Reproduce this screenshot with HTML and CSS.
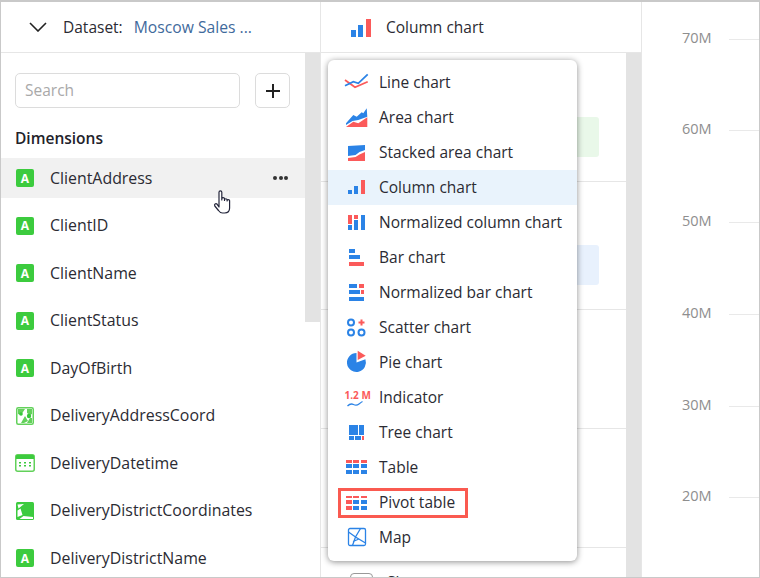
FILE: index.html
```html
<!DOCTYPE html>
<html lang="en">
<head>
    <meta charset="UTF-8">
    <title>Column chart</title>
    <link rel="stylesheet" href="styles.css">
</head>
<body>
<div class="app">
    <section class="pane fields">
        <header class="head">
            <svg class="chev" width="18" height="10" viewBox="0 0 18 10"><path d="M1 1l8 8 8-8" fill="none" stroke="#222" stroke-width="1.6"/></svg>
            <span class="head-label">Dataset:</span>
            <span class="head-link">Moscow Sales ...</span>
        </header>
        <div class="pane-body">
            <div class="field-list">
                <div class="tools">
                    <div class="search">Search</div>
                    <div class="add"><svg width="14" height="14" viewBox="0 0 14 14"><path d="M7 0v14M0 7h14" stroke="#222" stroke-width="2"/></svg></div>
                </div>
                <h2 class="group">Dimensions</h2>
                <div class="field hover"><span class="type">A</span><span class="name">ClientAddress</span><span class="dots"><i></i><i></i><i></i></span></div>
                <div class="field"><span class="type">A</span><span class="name">ClientID</span></div>
                <div class="field"><span class="type">A</span><span class="name">ClientName</span></div>
                <div class="field"><span class="type">A</span><span class="name">ClientStatus</span></div>
                <div class="field"><span class="type">A</span><span class="name">DayOfBirth</span></div>
                <div class="field">
                    <svg class="type-svg" width="18" height="18" viewBox="0 0 18 18"><rect x=".75" y=".75" width="16.5" height="16.5" rx="1.5" fill="#fff" stroke="#62d15a" stroke-width="1.5"/><path d="M2 2h7L5 8l-3-1zM11 2h5v5l-2 1-3-2zM9 9l3 5-4 2H5zM14 11h2v5h-5z" fill="#62d15a"/><circle cx="5" cy="7" r="1.8" fill="#36c73a"/><circle cx="13" cy="9" r="2.2" fill="#36c73a"/></svg>
                    <span class="name">DeliveryAddressCoord</span>
                </div>
                <div class="field">
                    <svg class="type-svg wide" width="20" height="18" viewBox="0 0 20 18"><rect x=".75" y=".75" width="18.5" height="16.5" rx="2" fill="#fff" stroke="#62d15a" stroke-width="1.5"/><path d="M1 2q0-1 1-1h16q1 0 1 1v3H1z" fill="#3ccb3e"/><path d="M4 8h2v1.500H4zM9 8h2v1.500H9zM14 8h2v1.500h-2zM4 11h2v1.500H4zM9 11h2v1.500H9zM14 11h2v1.500h-2z" fill="#3ccb3e"/></svg>
                    <span class="name">DeliveryDatetime</span>
                </div>
                <div class="field">
                    <svg class="type-svg" width="18" height="18" viewBox="0 0 18 18"><rect width="18" height="18" rx="1.500" fill="#3ccb3e"/><path d="M1.500 2.500L8 2 2.500 6.500zM1.500 8.500l3-2L6.500 13l-5 2zM7.500 14l9.500 1v2H3.500z" fill="#fff"/></svg>
                    <span class="name">DeliveryDistrictCoordinates</span>
                </div>
                <div class="field"><span class="type">A</span><span class="name">DeliveryDistrictName</span></div>
            </div>
            <div class="scroll short"></div>
        </div>
    </section>

    <section class="pane config">
        <header class="head">
            <svg class="head-icon" width="24" height="24" viewBox="0 0 24 24"><path class="b" d="M2 15h5v7H2zM9 10h5v12H9z"/><path class="r" d="M17 4h5v18h-5z"/></svg>
            <span class="head-label">Column chart</span>
        </header>
        <div class="pane-body">
            <div class="slots">
                <div class="slot s1"><div class="chip green"></div></div>
                <div class="slot s2"><div class="chip blue"></div></div>
                <div class="slot s3"></div>
                <div class="slot s4"></div>
                <div class="slot s5"><span class="check"></span><span class="check-label">Sheet</span></div>
            </div>
            <div class="scroll"></div>
        </div>
    </section>

    <section class="axis">
        <div class="tick"><span>70M</span><i></i></div>
        <div class="tick"><span>60M</span><i></i></div>
        <div class="tick"><span>50M</span><i></i></div>
        <div class="tick"><span>40M</span><i></i></div>
        <div class="tick"><span>30M</span><i></i></div>
        <div class="tick"><span>20M</span><i></i></div>
    </section>

    <ul class="menu">
        <li><svg width="24" height="24" viewBox="0 0 24 24"><path d="M1 10l10 7.300 12.700-5.600" fill="none" stroke="#fb5a5a" stroke-width="1.800"/><path d="M1 15.700l8.300-4 5 1.600 9.400-9" fill="none" stroke="#2b83e6" stroke-width="1.800"/></svg>Line chart</li>
        <li><svg width="24" height="24" viewBox="0 0 24 24"><path class="b" d="M2 18.300l7.300-8.300 3.400 1.700 5-4.400 1.600 1 3.400-5 .6 8.400-9 3.300-5.800 1-6.500 4z"/><path class="r" d="M2 22l7.300-5.300 5 1.600 9-6V22z"/></svg>Area chart</li>
        <li><svg width="24" height="24" viewBox="0 0 24 24"><path class="b" d="M4 6l17-1v5l-5.500 2-4 3L4 16z"/><path class="r" d="M4 18l7.500-1 4-2.500L21 12v9H4z"/></svg>Stacked area chart</li>
        <li class="on"><svg width="24" height="24" viewBox="0 0 24 24"><path class="b" d="M4 15h4v4H4zM10 11h4v8h-4z"/><path class="r" d="M17 5h4v14h-4z"/></svg>Column chart</li>
        <li><svg width="24" height="24" viewBox="0 0 24 24"><path class="r" d="M4 5h4v9H4zM10 5h4v4h-4z"/><path class="b" d="M4 15h4v5H4zM10 10h4v10h-4zM17 5h4v15h-4z"/></svg>Normalized column chart</li>
        <li><svg width="24" height="24" viewBox="0 0 24 24"><path class="b" d="M5 4h6v4H5zM5 10h11v4H5z"/><path class="r" d="M5 17h15v4H5z"/></svg>Bar chart</li>
        <li><svg width="24" height="24" viewBox="0 0 24 24"><path class="b" d="M5 4h8v4H5zM5 10h11v4H5zM5 17h15v4H5z"/><path class="r" d="M15 4h5v4h-5zM17 10h3v4h-3z"/></svg>Normalized bar chart</li>
        <li><svg width="24" height="24" viewBox="0 0 24 24"><g fill="none" stroke="#2b83e6" stroke-width="2"><circle cx="7" cy="7.500" r="3"/><circle cx="7" cy="17.500" r="3"/><circle cx="17.500" cy="17.500" r="3"/></g><path class="r" d="M16.500 4.500h2v2h2v2h-2v2h-2v-2h-2v-2h2z"/></svg>Scatter chart</li>
        <li><svg width="24" height="24" viewBox="0 0 24 24"><path class="b" d="M12.500 3A9.500 9.500 0 1 0 21.400 9.300L12.500 12.500z"/><path class="r" d="M13.700 .7L21.700 5.700 13.700 10z"/></svg>Pie chart</li>
        <li><svg width="24" height="24" viewBox="0 0 24 24"><text class="ind" x=".5" y="13.500">1.2 M</text><path d="M3.500 21q3-3 6-1.500t5.500-.5 3.500-2.500" fill="none" stroke="#2b83e6" stroke-width="1.300"/></svg>Indicator</li>
        <li><svg width="24" height="24" viewBox="0 0 24 24"><path class="b" d="M5 5h9v10H5zM15 5h5v10h-5zM5 16h5v4H5zM11 16h6v4h-6z"/><path class="r" d="M18 16h2v4h-2z"/></svg>Tree chart</li>
        <li><svg width="24" height="24" viewBox="0 0 24 24"><path class="r" d="M2 5h6v3H2zM9 5h6v3H9zM17 5h6v3h-6z"/><path class="b" d="M2 9h6v4H2zM9 9h6v4H9zM17 9h6v4h-6zM2 15h6v4H2zM9 15h6v4H9zM17 15h6v4h-6z"/></svg>Table</li>
        <li class="marked"><svg width="24" height="24" viewBox="0 0 24 24"><path class="r" d="M2 6h6v2H2zM9 6h6v2H9zM17 6h6v2h-6zM2 10h6v4H2zM2 16h6v4H2z"/><path class="b" d="M9 10h6v4H9zM17 10h6v4h-6zM9 16h6v4H9zM17 16h6v4h-6z"/></svg>Pivot table</li>
        <li><svg width="24" height="24" viewBox="0 0 24 24"><rect x="4.500" y="3.500" width="17" height="17" rx="1.500" fill="#fff" stroke="#2b83e6" stroke-width="1.300"/><path d="M4.500 7l7 5-3 8.500M16.500 3.500L11.500 12l10 6M9 16.500L15 14" fill="none" stroke="#2b83e6" stroke-width="1.300"/></svg>Map</li>
    </ul>

    <svg class="cursor" width="20" height="26" viewBox="0 0 20 26"><path d="M6 18V3.200C6 1.400 8.800 1.400 8.800 3.200V11V9.800c0-1.500 2.700-1.500 2.700 0V11.500 10.800c0-1.400 2.600-1.400 2.600 0V12 11.600c0-1.300 2.500-1.300 2.500 0v7.400c0 3-2 5-5 5H9.500c-2 0-3-1-4-2.500L1.800 17c-1-1.700 1-3 2.400-1.700z" fill="#fff" stroke="#23253a" stroke-width="1.200" stroke-linejoin="round"/></svg>
</div>
</body>
</html>
```

FILE: styles.css
```css
*{margin:0;padding:0;box-sizing:border-box;list-style:none;}
html,body{height:100%;overflow:hidden;background:#fff;}
body{font-family:"Open Sans","Noto Sans",sans-serif;font-size:15.5px;color:#2b2b33;}

.app{position:relative;display:flex;width:760px;height:578px;border:1px solid #c9c9c9;border-top-width:2px;overflow:hidden;}

.pane{display:flex;flex-direction:column;border-right:1px solid #e6e6e6;flex:none;}
.fields{width:320px;}
.config{width:321px;}
.head{display:flex;align-items:center;height:51px;padding-bottom:1px;flex:none;border-bottom:1px solid #e6e6e6;}
.pane-body{display:flex;flex:1;min-height:0;}
.scroll{width:15px;flex:none;background:#e3e3e3;}
.scroll.short{height:269px;}

.chev{margin:1px 16px 0 28px;}
.head-link{margin-left:11px;color:#3f6a9c;font-size:15.7px;}
.head-icon{margin:0 13px 0 28px;}

.field-list{flex:1;min-width:0;overflow:hidden;padding-top:20px;}
.tools{display:flex;gap:15px;padding:0 15px 0 14px;}
.search{flex:1;height:35px;line-height:33px;padding-left:9px;border:1px solid #dcdcdc;border-radius:5px;color:#a9a9a9;}
.add{display:flex;align-items:center;justify-content:center;width:35px;height:35px;border:1px solid #dcdcdc;border-radius:5px;}
.group{margin:19px 0 9px 14px;font-size:15.5px;font-weight:600;line-height:22px;color:#22222a;}

.field{display:flex;align-items:center;height:40px;margin-bottom:7.5px;padding-left:15px;}
.field.hover{background:#f1f1f1;}
.type{display:flex;align-items:center;justify-content:center;width:18px;height:18px;border-radius:2px;background:#3ccb3e;color:#fff;font-size:12px;font-weight:700;flex:none;}
.type-svg{flex:none;}
.type-svg.wide{margin:0 -1px;}
.name{margin:0 0 1px 16px;font-size:15.9px;}
.dots{display:flex;gap:1.500px;margin-left:auto;margin-right:17px;}
.dots i{width:4px;height:4px;border-radius:50%;background:#333;}

.slots{flex:1;min-width:0;overflow:hidden;}
.slot{border-bottom:1px solid #e6e6e6;}
.s1{height:129px;padding-top:64px;}
.s2{height:128px;padding-top:63px;}
.s3{height:119px;}
.s4{height:119px;}
.s5{display:flex;gap:14px;padding:25px 0 0 29px;border-bottom:0;}
.chip{width:200px;height:40px;margin-left:auto;margin-right:27px;border-radius:3px;}
.green{background:#e9f8e9;}
.blue{background:#e8f1fd;}
.check{width:23px;height:20px;border:1px solid #999;border-radius:4px;}
.check-label{line-height:18px;}

.axis{flex:1;padding-top:25.5px;}
.tick{display:flex;height:91.8px;color:#8e8e8e;font-size:14.5px;}
.tick span{width:69.5px;line-height:20px;text-align:right;}
.tick i{width:32px;height:1px;margin:11px 0 0 17.5px;background:#e9e9e9;}

.menu{position:absolute;left:327px;top:58px;width:249px;height:501px;padding:5px 0;background:#fff;border-radius:6px;box-shadow:0 1px 6px rgba(0,0,0,.45);font-size:15.5px;}
.menu li{position:relative;display:flex;align-items:center;gap:11px;height:35px;padding:0 0 1px 16px;}
.menu li.on{background:#e9f3fc;}
.menu li.marked::after{content:"";position:absolute;left:10px;top:3px;width:124px;height:24px;border:3px solid #fa5a50;box-sizing:content-box;}
.menu svg{flex:none;overflow:visible;}
.b{fill:#2b83e6;}
.r{fill:#fb5a5a;}
.ind{font-size:10px;font-weight:700;fill:#fb5a5a;}

.cursor{position:absolute;left:212px;top:187px;}
```
